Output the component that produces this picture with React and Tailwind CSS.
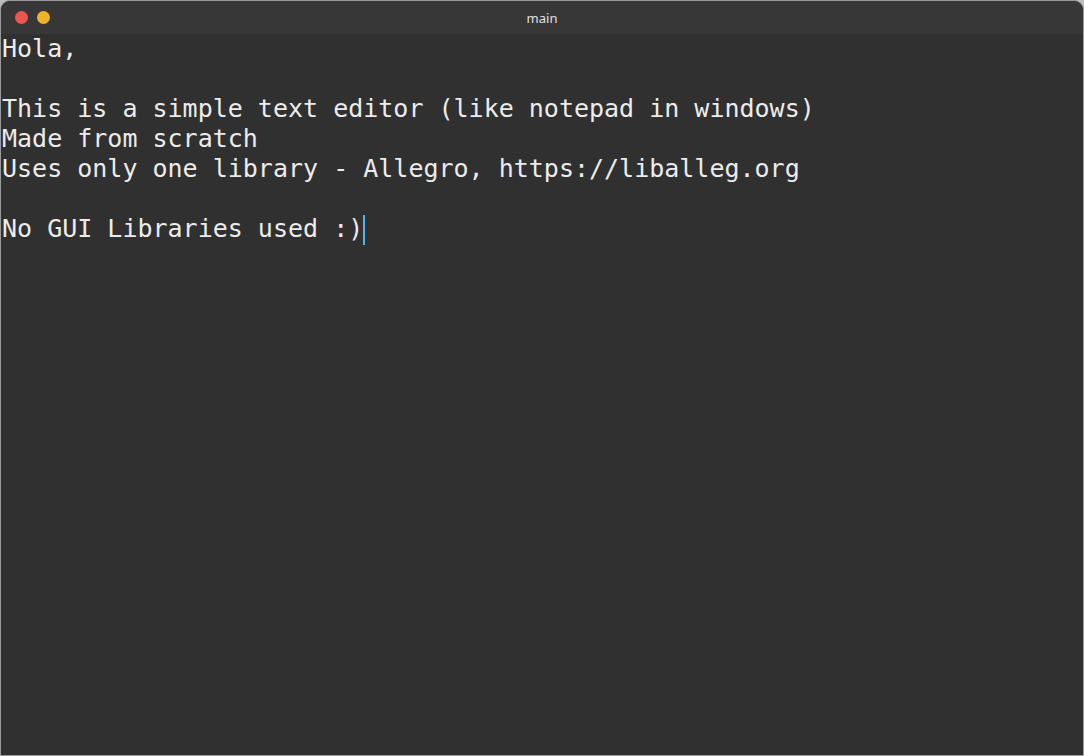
export default function App() {
  const lines = [
    "Hola,",
    "",
    "This is a simple text editor (like notepad in windows)",
    "Made from scratch",
    "Uses only one library - Allegro, https://liballeg.org",
    "",
    "No GUI Libraries used :)",
  ];
  return (
    <div className="w-[1084px] h-[756px] bg-[#bdbdbd]">
      <div className="w-full h-full flex flex-col border border-[#9a9a9a] rounded-t-[10px] overflow-hidden bg-[#303030]">
        <div className="h-[33px] shrink-0 bg-[#373737] relative flex items-center justify-center pt-[2px]">
          <div className="absolute left-[14px] top-[10px] flex gap-[9px]">
            <div className="w-[13px] h-[13px] rounded-full bg-[#ec5650]" />
            <div className="w-[13px] h-[13px] rounded-full bg-[#f0b22a]" />
          </div>
          <span className="text-[13px] text-[#e0e0e0] font-['Noto_Sans',sans-serif] leading-none">main</span>
        </div>
        <div className="flex-1 pl-[1px] font-['DejaVu_Sans_Mono',monospace] text-[25px] leading-[30px] text-[#ececec] whitespace-pre">
          {lines.map((l, i) => (
            <div key={i} className="h-[30px] flex items-start">
              <span>{l}</span>
              {i === lines.length - 1 && (
                <span className="w-[2px] h-[30px] mt-[1px] bg-[#4fb8f0] inline-block" />
              )}
            </div>
          ))}
        </div>
      </div>
    </div>
  );
}
